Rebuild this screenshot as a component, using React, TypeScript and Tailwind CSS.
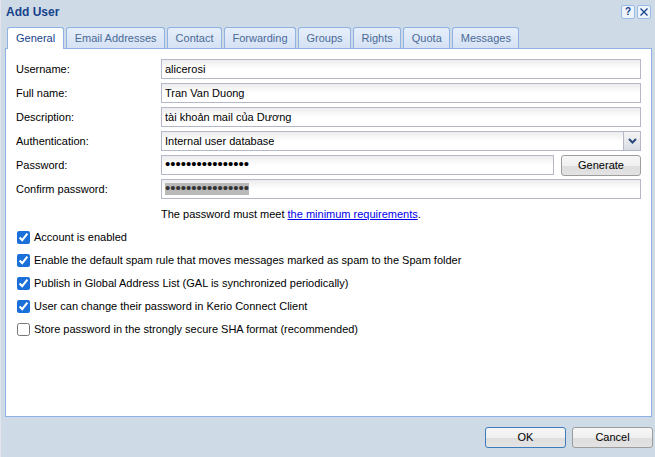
import React from 'react';

const tabs = ['General', 'Email Addresses', 'Contact', 'Forwarding', 'Groups', 'Rights', 'Quota', 'Messages'];

const inputCls =
  'h-[20px] border border-[#b5b8c8] bg-gradient-to-b from-[#ececec] via-white to-white px-[3px] text-[11px] leading-[18px] text-black';

const Row: React.FC<{ label: string; children: React.ReactNode }> = ({ label, children }) => (
  <div className="flex items-center h-[20px]">
    <div className="w-[145px] shrink-0 text-black">{label}</div>
    <div className="flex-1 flex gap-[7px]">{children}</div>
  </div>
);

const Check: React.FC<{ checked?: boolean; label: string }> = ({ checked, label }) => (
  <label className="flex items-center h-[18px] gap-[4px]">
    <input type="checkbox" defaultChecked={checked} className="w-[13px] h-[13px] m-0 accent-[#1b6fd9]" />
    <span>{label}</span>
  </label>
);

const Btn: React.FC<{ label: string; focused?: boolean; w: string }> = ({ label, focused, w }) => (
  <button
    className={`${w} h-[21px] rounded-[3px] border ${focused ? 'border-[#3d7bbd]' : 'border-[#9d9d9d]'} bg-[linear-gradient(#f6f6f6_0%,#f0f0f0_50%,#dddddd_50%,#e3e3e3_100%)] text-[11px] text-black`}
  >
    {label}
  </button>
);

const Dots: React.FC = () => <span className="text-[15px] leading-[16px]">{'••••••••••••••••'}</span>;

export default function App() {
  return (
    <div
      className="w-[655px] h-[457px] bg-[#cfdae7] border-l border-[#e2e6ec] flex flex-col text-[11px] overflow-hidden"
      style={{ fontFamily: '"Liberation Sans", Arial, sans-serif' }}
    >
      {/* header */}
      <div className="h-[26px] flex items-start justify-between pl-[5px] pr-[4px] pt-[3px]">
        <span className="font-bold text-[#15428b] text-[12px]">Add User</span>
        <div className="flex gap-[2px] pt-[2px]">
          <div className="w-[14px] h-[14px] border border-[#99bbe8] bg-[#eef3fa] rounded-[2px] flex items-center justify-center text-[#15428b] font-bold text-[10px] leading-none">
            ?
          </div>
          <div className="w-[14px] h-[14px] border border-[#99bbe8] bg-[#eef3fa] rounded-[2px] flex items-center justify-center">
            <svg width="10" height="10" viewBox="0 0 10 10">
              <path d="M1.5 1.5 L8.5 8.5 M8.5 1.5 L1.5 8.5" stroke="#15428b" strokeWidth="1.3" />
            </svg>
          </div>
        </div>
      </div>

      {/* tabs */}
      <div className="flex gap-[2px] pl-[6px] h-[22px] items-end">
        {tabs.map((t, i) =>
          i === 0 ? (
            <div
              key={t}
              className="h-[22px] px-[8px] bg-white border border-b-0 border-[#8db2e3] rounded-t-[3px] flex items-center text-[#15428b] relative z-10 -mb-px"
            >
              {t}
            </div>
          ) : (
            <div
              key={t}
              className="h-[21px] px-[7.5px] bg-gradient-to-b from-[#e6eefa] to-[#d5e2f4] border border-b-0 border-[#8db2e3] rounded-t-[3px] flex items-center text-[#4a6a98]"
            >
              {t}
            </div>
          )
        )}
      </div>

      {/* panel */}
      <div className="mx-[4px] w-[647px] h-[369px] bg-white border border-[#8db2e3] pt-[10px] pl-[10px] pr-[10px] flex flex-col">
        <div className="flex flex-col gap-[4px]">
          <Row label="Username:">
            <div className={`${inputCls} flex-1`}>alicerosi</div>
          </Row>
          <Row label="Full name:">
            <div className={`${inputCls} flex-1`}>Tran Van Duong</div>
          </Row>
          <Row label="Description:">
            <div className={`${inputCls} flex-1`}>tài khoản mail của Dương</div>
          </Row>
          <Row label="Authentication:">
            <div className="flex-1 flex h-[20px]">
              <div className={`${inputCls} flex-1 border-r-0`}>Internal user database</div>
              <div className="w-[18px] h-[20px] border border-[#b5b8c8] bg-gradient-to-b from-[#f4f4f4] to-[#d9dde3] flex items-center justify-center">
                <svg width="9" height="6" viewBox="0 0 9 6">
                  <path d="M1 1 L4.5 4.5 L8 1" stroke="#29487a" strokeWidth="2" fill="none" />
                </svg>
              </div>
            </div>
          </Row>
          <Row label="Password:">
            <div className={`${inputCls} flex-1`}>
              <Dots />
            </div>
            <Btn label="Generate" w="w-[80px]" />
          </Row>
          <Row label="Confirm password:">
            <div className={`${inputCls} flex-1`}>
              <span className="bg-[#b9b9b9] text-[#333]">
                <Dots />
              </span>
            </div>
          </Row>
        </div>

        <div className="pl-[145px] mt-[6px] h-[18px] leading-[18px]">
          The password must meet <span className="underline text-[#0000ee]">the minimum requirements</span>.
        </div>

        <div className="flex flex-col gap-[5px] mt-[5px] pl-[1px]">
          <Check checked label="Account is enabled" />
          <Check checked label="Enable the default spam rule that moves messages marked as spam to the Spam folder" />
          <Check checked label="Publish in Global Address List (GAL is synchronized periodically)" />
          <Check checked label="User can change their password in Kerio Connect Client" />
          <Check label="Store password in the strongly secure SHA format (recommended)" />
        </div>
      </div>

      {/* footer */}
      <div className="flex justify-end gap-[6px] pr-[2px] pt-[10px]">
        <Btn label="OK" focused w="w-[81px]" />
        <Btn label="Cancel" w="w-[81px]" />
      </div>
    </div>
  );
}
